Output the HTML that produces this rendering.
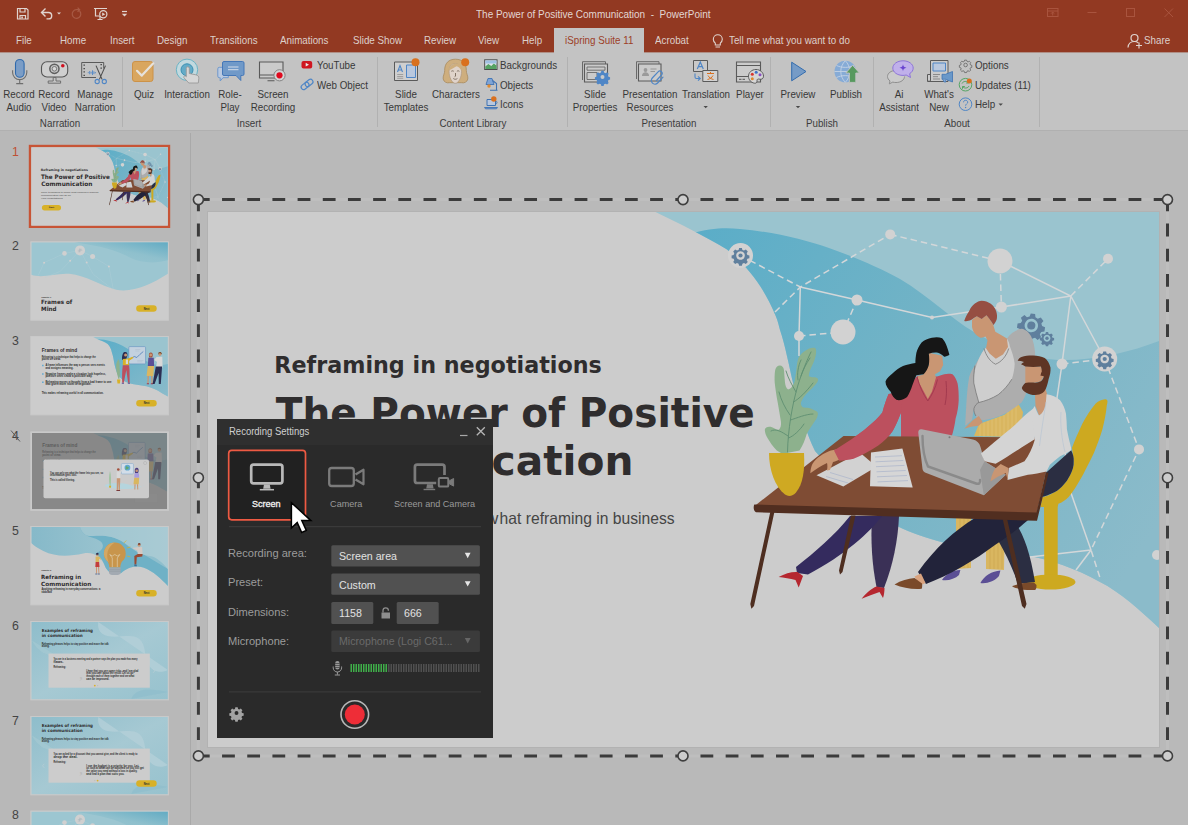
<!DOCTYPE html>
<html lang="en">
<head>
<meta charset="utf-8">
<title>The Power of Positive Communication - PowerPoint</title>
<style>
*{box-sizing:border-box;margin:0;padding:0}
html,body{width:1188px;height:825px;overflow:hidden}
body{position:relative;background:#b9b9b9;font-family:"Liberation Sans",sans-serif;font-size:9.8px;color:#383838}
.abs{position:absolute}
#hdr{position:absolute;left:0;top:0;width:1188px;height:52px;background:#923922}
#hdrline{position:absolute;left:0;top:52px;width:1188px;height:1px;background:#b08f86}
#ribbon{position:absolute;left:0;top:53px;width:1188px;height:77px;background:#c3c3c3}
#ribline{position:absolute;left:0;top:130px;width:1188px;height:1px;background:#b0b0b0}
.tab{position:absolute;top:33px;height:14px;line-height:14px;font-size:10.8px;color:#ddd0cb;white-space:pre;transform:scaleX(.907);transform-origin:0 50%}
#acttab{position:absolute;left:554px;top:28px;width:89.5px;height:25px;background:#c3c3c3}
.t{position:absolute;white-space:pre;line-height:13px}
.big{position:absolute;top:87.5px;width:80px;margin-left:-40px;text-align:center;line-height:13px;white-space:pre;font-size:10.8px;transform:scaleX(.907)}
.grp{position:absolute;top:117px;width:100px;margin-left:-50px;text-align:center;line-height:13px;color:#3c3c3c;font-size:10.8px;transform:scaleX(.907)}
.sep{position:absolute;top:57px;width:1px;height:70px;background:#b1b1b1}
.sm{position:absolute;white-space:pre;line-height:13px;font-size:10.8px;transform:scaleX(.907);transform-origin:0 50%}
#leftpanel{position:absolute;left:0;top:131px;width:190px;height:694px;background:#b8b8b8}
#vsep{position:absolute;left:190px;top:133px;width:1px;height:692px;background:#a9a9a9}
.num{position:absolute;left:8px;width:15px;text-align:center;font-size:12.6px;line-height:14px;color:#424242}
.th{position:absolute;left:30px;width:139px;height:79.5px;background:#cccccc;border:1px solid #c8c8c8;overflow:hidden}
#slide{position:absolute;left:208px;top:212px;width:951px;height:535px;background:#cccccc;overflow:hidden}
#slideborder{position:absolute;left:207px;top:211px;width:953px;height:537px;background:#b2b2b2}
.dl{font-size:9.800px;line-height:13px;text-align:center;white-space:pre;transform:scaleX(.925)}
.lb{font-size:11.100px;line-height:14px;white-space:pre;color:#9c9c9c}
.dv{font-size:10.900px;line-height:14px;white-space:pre;color:#e2e2e2;transform:scaleX(.977);transform-origin:0 50%}
</style>
</head>
<body>
<div id="hdr"></div>
<div id="hdrline"></div>
<div id="ribbon"></div>
<div id="ribline"></div>
<div id="acttab"></div>
<!--TABS-->
<div class="tab" style="left:476px;top:7px;font-size:11px;color:#e2d6d2">The Power of Positive Communication  -  PowerPoint</div>
<div class="tab" style="left:16px">File</div>
<div class="tab" style="left:60px">Home</div>
<div class="tab" style="left:110px">Insert</div>
<div class="tab" style="left:157px">Design</div>
<div class="tab" style="left:209.8px">Transitions</div>
<div class="tab" style="left:279.5px">Animations</div>
<div class="tab" style="left:353px">Slide Show</div>
<div class="tab" style="left:424px">Review</div>
<div class="tab" style="left:477.5px">View</div>
<div class="tab" style="left:521.5px">Help</div>
<div class="tab" style="left:565px;color:#9c3e27">iSpring Suite 11</div>
<div class="tab" style="left:655px">Acrobat</div>
<div class="tab" style="left:729px">Tell me what you want to do</div>
<div class="tab" style="left:1144px">Share</div>
<svg class="abs" style="left:0;top:0" width="1188" height="53" viewBox="0 0 1188 53" fill="none" stroke="#e0d4cf" stroke-width="1.2">
<!-- save -->
<path d="M17.5 8.5h9l1.5 1.5v9h-10.500z M20 8.500v3.500h5v-3.500 M20 19v-3.500h5.500v3.500" />
<rect x="21.3" y="16.500" width="1.600" height="2" fill="#e0d4cf" stroke="none"/>
<!-- undo -->
<path d="M42 12.500h6.500a3.200 3.200 0 0 1 0 6.400h-2 M45.500 8.500l-4 4 4 4" stroke-width="1.400"/>
<path d="M57 12.500h4l-2 2z" fill="#e0d4cf" stroke="none"/>
<!-- redo (dim) -->
<path d="M79.600 11a4.300 4.300 0 1 1 -3-1.300h2.800 M77.600 7.600l2.100 2.100-2.100 2.100" stroke="#a85a45" stroke-width="1.200"/>
<!-- present -->
<path d="M94 8.500h13 M95.500 8.500v7.500h4 M97.500 19.500h5 M100 16v3.500" stroke-width="1.200"/>
<circle cx="103.300" cy="14.200" r="3.600" />
<path d="M102.200 12.400v3.600l3-1.800z" fill="#e0d4cf" stroke="none"/>
<!-- customize -->
<path d="M122 11.500h5" stroke-width="1.200"/>
<path d="M121.800 13.800h5.400l-2.700 2.700z" fill="#e0d4cf" stroke="none"/>
<!-- bulb -->
<path d="M715.300 43.200c-1.300-1.200-2-2.400-2-4a4.500 4.500 0 0 1 9 0c0 1.600-.7 2.800-2 4v1.800h-5z M715.500 47h4.500" stroke-width="1.100"/>
<!-- share icon -->
<circle cx="1134.500" cy="38" r="3.500" stroke-width="1.200"/>
<path d="M1128 47.500c.3-3.500 2.500-6 6.500-6 1.500 0 2.800.5 3.700 1.200 M1139 42.500v6 M1136 45.500h6" stroke-width="1.200"/>
<!-- window controls (dim) -->
<g stroke="#a9543e" stroke-width="1">
<rect x="1047.500" y="8.500" width="10.500" height="8"/><path d="M1047.500 11h10.500 M1052.700 15.500v-3.500 M1051 13.700l1.700-1.700 1.700 1.700"/>
<path d="M1087.500 12.500h9"/>
<rect x="1126.500" y="8.500" width="8" height="8"/>
<path d="M1164.500 8.500l8.500 8.500 M1173 8.500l-8.500 8.500"/>
</g>
</svg>
<!--/TABS-->
<!--RIBBON-->
<div class="sep" style="left:122px"></div>
<div class="sep" style="left:377px"></div>
<div class="sep" style="left:567px"></div>
<div class="sep" style="left:770px"></div>
<div class="sep" style="left:873px"></div>
<div class="sep" style="left:1039px"></div>
<div class="big" style="left:19px">Record
Audio</div>
<div class="big" style="left:54.3px">Record
Video</div>
<div class="big" style="left:94.5px">Manage
Narration</div>
<div class="big" style="left:143.5px">Quiz</div>
<div class="big" style="left:186.5px">Interaction</div>
<div class="big" style="left:230px">Role-
Play</div>
<div class="big" style="left:272.5px">Screen
Recording</div>
<div class="big" style="left:406px">Slide
Templates</div>
<div class="big" style="left:455.5px">Characters</div>
<div class="big" style="left:595px">Slide
Properties</div>
<div class="big" style="left:649.5px">Presentation
Resources</div>
<div class="big" style="left:705.5px">Translation</div>
<div class="big" style="left:749.5px">Player</div>
<div class="big" style="left:798px">Preview</div>
<div class="big" style="left:846px">Publish</div>
<div class="big" style="left:898.5px">Ai
Assistant</div>
<div class="big" style="left:939px">What's
New</div>
<div class="grp" style="left:59.5px">Narration</div>
<div class="grp" style="left:249px">Insert</div>
<div class="grp" style="left:473px">Content Library</div>
<div class="grp" style="left:669px">Presentation</div>
<div class="grp" style="left:822px">Publish</div>
<div class="grp" style="left:956.5px">About</div>
<div class="sm" style="left:316.5px;top:59px">YouTube</div>
<div class="sm" style="left:316.5px;top:78.5px">Web Object</div>
<div class="sm" style="left:500px;top:59px">Backgrounds</div>
<div class="sm" style="left:500px;top:78.5px">Objects</div>
<div class="sm" style="left:500px;top:98px">Icons</div>
<div class="sm" style="left:975px;top:59px">Options</div>
<div class="sm" style="left:975px;top:78.5px">Updates (11)</div>
<div class="sm" style="left:975px;top:98px">Help</div>
<!--RIBICONS-->
<svg class="abs" style="left:0;top:53px" width="1188" height="78" viewBox="0 53 1188 78" fill="none">
<!-- mic -->
<rect x="15.500" y="59.500" width="8.600" height="17.800" rx="4.300" fill="#7b9dc6" stroke="#2f6aad" stroke-width="1.100"/>
<path d="M12.600 70.200v2.300a7.100 7.100 0 0 0 14.200 0v-2.300 M19.700 79.600v3.700 M16.200 83.600h7" stroke="#6e6e6e" stroke-width="1.100"/>
<!-- webcam -->
<rect x="41.500" y="61.700" width="26.200" height="15.300" rx="5.500" fill="#cfcfcf" stroke="#555" stroke-width="1.100"/>
<circle cx="54.400" cy="68.800" r="4.600" fill="#c4c4c4" stroke="#5e5e5e" stroke-width="1.500"/>
<circle cx="54.400" cy="68.800" r="2.300" fill="#d8d8d8" stroke="#6e6e6e" stroke-width=".9"/>
<circle cx="62.800" cy="65.700" r="1.800" fill="#d0101f"/>
<path d="M53.200 77.500h2.800v3.500h4.600v2.200h-12.400v-2.200h5z" fill="#c4c4c4" stroke="#666" stroke-width=".9"/>
<!-- manage narration -->
<path d="M96 77.500h-14.300v-15h22v6" stroke="#5a5a5a" stroke-width="1"/>
<path d="M84.200 64.500v11.500 M101.200 64v5" stroke="#4a4a4a" stroke-width="1.500" stroke-dasharray="1.300 2.100"/>
<path d="M88.300 72.200v1 M89.700 71v3.300 M91.100 71.800v1.800 M92.500 70.300v4.700 M93.900 71.300v2.800 M95.300 72v1.300" stroke="#4f86c6" stroke-width=".9"/>
<path d="M96 65.600l6.100 13.800 M105.500 65.600l-6.100 13.800" stroke="#4d4d4d" stroke-width="1.100"/>
<circle cx="97.200" cy="81.500" r="2.100" stroke="#4f86c6" stroke-width="1.100"/>
<circle cx="104.300" cy="81.500" r="2.100" stroke="#4f86c6" stroke-width="1.100"/>
<!-- quiz -->
<rect x="132.500" y="61.500" width="20.500" height="20" rx="2.500" fill="#d9a65f" stroke="#cc9248" stroke-width="1"/>
<path d="M137 70.800l4.800 4.800l11.500-12.300" stroke="#e6e2dc" stroke-width="2.200" stroke-linecap="round" stroke-linejoin="round"/>
<!-- interaction -->
<circle cx="187" cy="69.800" r="10.700" fill="#c1d9df" stroke="#6cb3c4" stroke-width="1"/>
<circle cx="187" cy="69.800" r="6" fill="#64abc7" stroke="#3a90b3" stroke-width="1"/>
<path d="M186.300 68.300a1.500 1.500 0 0 1 3 0v5.200l6.500 1.300c2.200.5 3.200 1.600 3 3.700l-.5 4.500h-9.500l-4.800-5.200c-.8-1 .3-2.500 1.500-1.700l.8.700z" fill="#d6d6d6" stroke="#9a9a9a" stroke-width=".9" stroke-linejoin="round"/>
<!-- role-play -->
<path d="M219.300 67.300h9v10.400h-5.300l-2.800 3.300v-3.300h-.9a1.500 1.500 0 0 1 -1.500-1.500v-7.400a1.500 1.500 0 0 1 1.500-1.500z" fill="#bacae1" stroke="#6e98cc" stroke-width="1"/>
<path d="M224 61.500h18.500a1.500 1.500 0 0 1 1.500 1.500v11a1.500 1.500 0 0 1 -1.500 1.500h-1.700v5l-4.800-5h-12a1.500 1.500 0 0 1 -1.500-1.500v-11a1.500 1.500 0 0 1 1.500-1.500z" fill="#7099c8" stroke="#4477b8" stroke-width="1"/>
<path d="M228 67h10.500 M228 69.700h10.500" stroke="#d6dde8" stroke-width="1"/>
<!-- screen recording -->
<path d="M259.500 62h23.500v16h-23.500z" fill="#cbcbcb" stroke="#5a5a5a" stroke-width="1.100"/>
<path d="M259.500 75h16 M267.500 80.700h7" stroke="#5a5a5a" stroke-width="1.100"/>
<circle cx="279.500" cy="75.300" r="5.600" fill="#d4d4d4" stroke="#7a7a7a" stroke-width=".9"/>
<circle cx="279.500" cy="75.300" r="3.100" fill="#df0a1e"/>
<!-- youtube -->
<rect x="301.500" y="61" width="10.700" height="7.400" rx="2" fill="#cf1620"/>
<path d="M305.700 62.800v3.800l3.300-1.900z" fill="#e8e8e8"/>
<!-- web object link -->
<g stroke="#4f86c6" stroke-width="1.200" fill="none" transform="rotate(-38 307 84.500)">
<rect x="300.300" y="82" width="8.600" height="5" rx="2.500"/>
<rect x="305.300" y="82" width="8.600" height="5" rx="2.500"/>
</g>
<!-- slide templates -->
<path d="M394.500 62h23v18.500h-23z" fill="#cfcfcf" stroke="#5a5a5a" stroke-width="1"/>
<path d="M406.500 65h9v12.500h-9z" fill="#b9c8de" stroke="#4f86c6" stroke-width="1"/>
<path d="M397.500 72l2.500-6.500l2.500 6.500 M398.400 70h3.200" stroke="#4f86c6" stroke-width="1.100"/>
<path d="M397.200 74.500h6 M397.200 76.500h6 M397.200 78.300h6" stroke="#8a8a8a" stroke-width=".7"/>
<circle cx="415.500" cy="62.300" r="4" fill="#d9701e"/>
<!-- characters -->
<path d="M455.500 59.200C462.500 59.200 466.500 63.500 466.300 70.500C466.200 73.500 468.300 76 467.800 79C467.300 82 464 83.400 461.500 82.700L449.500 82.700C447 83.400 443.700 82 443.200 79C442.700 76 444.800 73.500 444.700 70.500C444.500 63.500 448.500 59.200 455.500 59.200Z" fill="#ceae7e" stroke="#a88a5e" stroke-width=".8"/>
<path d="M455.300 63.800c4.300 0 6.200 3.200 6.200 7.700c0 5.800-2.900 11.800-6.200 11.800s-6.200-6-6.200-11.800c0-4.500 1.900-7.700 6.200-7.700z" fill="#e0d3ca" stroke="#a8937f" stroke-width=".6"/>
<path d="M451.300 71.300c.8-.6 1.700-.6 2.500 0 M456.900 71.300c.8-.6 1.700-.6 2.500 0 M453.300 78.500c1.300 1 2.800 1 4.100 0 M455.500 73v3.200l-.9.500" stroke="#6a5a4c" stroke-width=".8" fill="none"/>
<path d="M448.900 70.500C449.600 65.800 452.800 63.300 457 63.800C460.600 64.300 462 67 461.800 71C460.200 68.300 458.500 66.700 456.500 66.200C454 67.800 451.300 69 448.900 70.500Z" fill="#ceae7e"/>
<circle cx="465.200" cy="62.300" r="4" fill="#d9701e"/>
<!-- backgrounds -->
<rect x="484.700" y="59.800" width="12.300" height="9.700" fill="#dfe4ea" stroke="#4a4a4a" stroke-width="1"/>
<path d="M485.300 66.500l3-2.500l3 2l2.500-2.500l2.700 2v3.500h-11.200z" fill="#55a263"/>
<path d="M485.300 60.500h11.200v3h-11.200z" fill="#9fc0e2"/>
<!-- objects lamp -->
<path d="M488 78.500h4l2 6h-8z" fill="#7ea4d6" stroke="#3f73b3" stroke-width=".9"/>
<path d="M492.500 80.500l4 3v6.500 M490 90.300h7.500" stroke="#3f73b3" stroke-width="1.100"/>
<circle cx="489" cy="86" r="1.700" fill="#e08a2e"/>
<!-- icons -->
<path d="M487 99.500h8.500v6h-8.500z" fill="#b9c8de" stroke="#3f73b3" stroke-width="1"/>
<path d="M484.500 107.500h13l-1 1.300h-11z" fill="#7ea4d6" stroke="#3f73b3" stroke-width=".9"/>
<path d="M495.500 101c2 0 2 3 0 3" stroke="#3f73b3" stroke-width=".9"/>
<circle cx="493.800" cy="99" r="2.700" fill="#d9701e"/>
<!-- slide properties -->
<path d="M582.500 80v-18.300h23v2.300" stroke="#6a6a6a" stroke-width="1"/>
<path d="M584.500 64h23v18h-23z" fill="#cbcbcb" stroke="#5a5a5a" stroke-width="1.100"/>
<path d="M587 67h18v3.200h-18z M587 72.500h10v7h-10z" stroke="#6a6a6a" stroke-width=".9"/>
<g transform="translate(602.500 77) scale(.88)"><path d="M-1.300-7h2.600l.5 1.900 1.700.7 1.700-1 1.800 1.800-1 1.700.7 1.700 1.900.5v2.600l-1.900.5-.7 1.700 1 1.700-1.800 1.800-1.700-1-1.700.7-.5 1.900h-2.600l-.5-1.900-1.700-.7-1.700 1-1.800-1.800 1-1.700-.7-1.700-1.900-.5v-2.600l1.900-.5.700-1.700-1-1.700 1.800-1.800 1.700 1 1.700-.7z" fill="#4f86c6"/><circle r="2.300" fill="#c9c9c9"/></g>
<!-- presentation resources -->
<path d="M636.500 79v-17.300h22.500v2.300" stroke="#6a6a6a" stroke-width="1"/>
<path d="M638.500 64h22.500v17h-22.500z" fill="#cbcbcb" stroke="#5a5a5a" stroke-width="1.100"/>
<circle cx="645.500" cy="70" r="1.900" fill="#9a9a9a"/><path d="M642 76c0-2.500 1.500-3.700 3.500-3.700s3.500 1.200 3.500 3.700z" fill="#9a9a9a"/>
<path d="M650.500 69h6 M650.500 71.500h4.500" stroke="#8a8a8a" stroke-width=".8"/>
<g stroke="#4f86c6" stroke-width="1.200" stroke-linecap="round"><path d="M656.500 80.500l5-5.500a2.300 2.300 0 0 0 -3.400-3.200l-5.800 6.200a3.600 3.600 0 0 0 5.300 5l5.400-5.800"/></g>
<!-- translation -->
<path d="M693.500 60.500h14v11h-14z" fill="#c9c9c9" stroke="#5a5a5a" stroke-width="1"/>
<path d="M697.300 69l3-7l3 7 M698.300 66.700h4" stroke="#4f86c6" stroke-width="1.200"/>
<path d="M702.800 70.500h15v11h-15z" fill="#d2d2d2" stroke="#5a5a5a" stroke-width="1"/>
<path d="M707 73.500h7 M710.500 72v1.500 M708 75.500c1 2 3 3.500 5.500 4 M713 75.500c-1 2-3 3.500-5.500 4" stroke="#d9701e" stroke-width="1"/>
<path d="M695 73.500v3.500a1.500 1.500 0 0 0 1.500 1.500h3.500 M698 76.300l2.300 2.200-2.300 2.200" stroke="#4f86c6" stroke-width="1.100"/>
<!-- player -->
<path d="M736.500 62h24v20h-24z" fill="#cbcbcb" stroke="#5a5a5a" stroke-width="1.100"/>
<path d="M736.500 65.500h24 M736.500 76.500h13" stroke="#5a5a5a" stroke-width="1"/>
<path d="M739 79.300h2.500 M742.500 79.300h2.500" stroke="#6a6a6a" stroke-width="1.300"/>
<path d="M756 69.500c4.200 0 7.500 3 7.500 6.700c0 2.500-2 3.500-3.700 3c-1.700-.5-3 0-2.800 1.500c.2 1.500-.8 2.800-2.500 2.500c-3.500-.6-6-3.300-6-7c0-3.700 3.300-6.700 7.500-6.700z" fill="#d6d6d6" stroke="#5a5a5a" stroke-width="1"/>
<circle cx="752.300" cy="74.300" r="1.500" fill="#d8352e"/><circle cx="756.200" cy="72.300" r="1.500" fill="#3f73c8"/><circle cx="760" cy="74.800" r="1.500" fill="#8a4fc0"/><circle cx="752.300" cy="78.800" r="1.500" fill="#e08a2e"/>
<!-- preview -->
<path d="M791.700 62.200l14.300 9.300l-14.300 9.300z" fill="#769bc6" stroke="#336cae" stroke-width="1" stroke-linejoin="round"/>
<!-- publish -->
<circle cx="845.300" cy="71.500" r="10.800" fill="#86abd6"/>
<path d="M834.500 71.500h21.600 M845.300 60.700c-6 6-6 15.600 0 21.600 M845.300 60.700c6 6 6 15.600 0 21.600 M836.500 65.500c5 2.500 12.600 2.500 17.600 0 M836.500 77.500c5-2.500 12.600-2.500 17.600 0" stroke="#c3d1e4" stroke-width=".9"/>
<path d="M852.600 65.300l6.800 7.700h-3.600v9.400h-6.400v-9.400h-3.600z" fill="#57995f" stroke="#c3c3c3" stroke-width=".9"/>
<!-- ai assistant -->
<path d="M896 70.500c-5 0-8.500 2.700-8.500 6c0 1.800 1 3.300 2.500 4.400l-.7 3l3.500-1.800c1 .3 2 .4 3.200.4c5 0 8.500-2.700 8.500-6" fill="#cbcbcb" stroke="#8e8e8e" stroke-width="1"/>
<path d="M903 60.800c5.800 0 10.200 3.300 10.200 7.300c0 2.300-1.400 4.300-3.600 5.600l.9 3.800l-4.300-2.500c-1 .2-2 .4-3.200.4c-5.800 0-10.200-3.300-10.200-7.300s4.400-7.300 10.200-7.300z" fill="#c0b0ea" stroke="#8d74d8" stroke-width="1"/>
<path d="M903 64.300c.4 2.300 1.200 3.100 3.500 3.500c-2.300.4-3.100 1.200-3.500 3.500c-.4-2.300-1.200-3.100-3.500-3.500c2.300-.4 3.100-1.200 3.500-3.500z" fill="#6a45d0"/>
<!-- what's new -->
<path d="M930.500 60.500h17.500v21h-20.500v-7h3" fill="#cbcbcb" stroke="#5a5a5a" stroke-width="1"/>
<path d="M930.500 60.500v19.500a1.500 1.500 0 0 1 -3 0" stroke="#5a5a5a" stroke-width="1"/>
<path d="M933 63h12.500v8h-12.500z" fill="#b9c8de" stroke="#4f86c6" stroke-width="1"/>
<path d="M933 74.500h7 M933 76.700h5 M933 79h7" stroke="#7a7a7a" stroke-width=".8"/>
<path d="M952.500 71.500v10.500l-7-2.700h-3.500v-5h3.500z" fill="#6a98c9" stroke="#3f73b3" stroke-width=".8"/>
<path d="M943 79.500l1 2.500h2l-.7-2.500" fill="#86abd6" stroke="#3f73b3" stroke-width=".7"/>
<!-- options gear -->
<g transform="translate(965.600 65) scale(.75)"><path d="M-1.300-6.500h2.600l.6 1.800 1.400.6 1.700-.9 1.800 1.800-.9 1.700.6 1.400 1.800.6v2.600l-1.800.6-.6 1.400.9 1.700-1.800 1.800-1.700-.9-1.400.6-.6 1.800h-2.600l-.6-1.800-1.400-.6-1.700.9-1.800-1.800.9-1.700-.6-1.400-1.800-.6v-2.600l1.800-.6.600-1.400-.9-1.700 1.800-1.800 1.700.9 1.400-.6z" stroke="#555" stroke-width=".9"/><circle r="2.400" stroke="#555" stroke-width=".9"/></g>
<!-- updates -->
<circle cx="965.500" cy="84.700" r="6.300" stroke="#56a565" stroke-width="1"/>
<path d="M962 83.500c1-2.300 4.500-2.800 6.300-.8 M968.500 80.700v2.300h-2.300 M969 86c-1 2.300-4.500 2.800-6.300.8 M962.500 88.800v-2.300h2.300" stroke="#56a565" stroke-width="1"/>
<circle cx="969.300" cy="81" r="2.500" fill="#d9701e"/>
<!-- help -->
<circle cx="965.500" cy="104.200" r="6.300" stroke="#4f86c6" stroke-width="1"/>
<path d="M963.500 102.300c0-1.300 1-2 2.100-2c1.200 0 2.100.8 2.100 1.900c0 1.700-2.100 1.700-2.100 3.500" stroke="#4f86c6" stroke-width="1"/><circle cx="965.600" cy="107.500" r=".7" fill="#4f86c6"/>
<!-- dropdown arrows -->
<path d="M703.500 106h4.400l-2.200 2.300z M795.800 106h4.400l-2.200 2.300z M998.500 103.500h4.400l-2.200 2.300z" fill="#4a4a4a"/>
</svg>
<!--/RIBBON-->
<div id="vsep"></div>
<!--THUMBS-->
<svg class="abs" style="left:0;top:131px" width="190" height="694" viewBox="0 131 190 694">
<defs>
<linearGradient id="t2g" x1="0" y1="1" x2="1" y2="0"><stop offset="0" stop-color="#9cc6d1"/><stop offset=".55" stop-color="#8fc0cd"/><stop offset="1" stop-color="#62abc3"/></linearGradient>
<linearGradient id="t3g" x1="0" y1="0" x2="1" y2="1"><stop offset="0" stop-color="#5aadc8"/><stop offset="1" stop-color="#8bbbca"/></linearGradient>
<linearGradient id="t5g" x1="0" y1="0" x2="1" y2="0"><stop offset="0" stop-color="#86b9c9"/><stop offset="1" stop-color="#a9cbd4"/></linearGradient>
<linearGradient id="t6g" x1="0" y1="0" x2="1" y2="1"><stop offset="0" stop-color="#8ebdcb"/><stop offset=".5" stop-color="#a6c9d3"/><stop offset="1" stop-color="#97c2ce"/></linearGradient>
<g id="pill"><rect x="104.900" y="63" width="20.500" height="6.500" rx="3.250" fill="#d8b128"/><text x="115.200" y="67.300" font-size="2.600" font-weight="700" text-anchor="middle" fill="#2f2d2e">Next</text></g>
<g id="t2c">
<rect width="136.600" height="77.400" fill="#cccccc"/>
<path d="M0 32.500C12 36.500 24 30.500 38 31.500C55 33 70 44 85 47.500C102 50.500 120 42 136.600 31.500L136.600 0L0 0Z" fill="#9cc6d1"/>
<path d="M43 0C60 3 80 5 98 15C112 22 126 20.500 136.600 18L136.600 0Z" fill="url(#t2g)"/>
<g stroke="#b4d2da" stroke-width=".35" fill="none"><path d="M7 33L12.800 20.400L33.200 11.100L48.700 8.100L61.300 14.300L77.600 24.100L82 47 M14 35L29 29L38.900 18.500L48.700 8.100L55.400 20.200L62 32L80 46"/></g>
<g fill="#d0d0d0"><circle cx="33.200" cy="11.100" r="2.300"/><circle cx="48.700" cy="8.100" r="5"/><circle cx="61.300" cy="14.300" r="2.500"/><circle cx="12.800" cy="20.400" r="1"/><circle cx="38.900" cy="18.500" r="1"/><circle cx="55.400" cy="20.200" r="1"/><circle cx="77.600" cy="24.100" r="1"/></g>
<path d="M46.500 9.500h2v-2.500h2 M48.500 10v-4 M46.500 8h4.500" stroke="#a9b6bd" stroke-width=".5" fill="none"/>
</g>
<g id="t3c">
<rect width="136.600" height="77.400" fill="#cccccc"/>
<path d="M62 0C68 3.500 73.500 5 76.400 7.100C79 10 80 12.500 80.600 15.500C82 19.500 82.500 23.500 83.200 27.300C84 31 85 34.500 86.500 37.400C89 41.500 92.500 44 96.600 45.800C102.500 47.800 109 48 115.200 49.200C120.500 50.500 126 53 130.300 55.900C132.500 57 134.500 58.300 136.600 59.500L136.600 0Z" fill="#9ac4cf"/>
<path d="M66 2.300C75 2.500 85 5 95 11C105 17 112 24 122 27C128 28.500 132 28 136.600 27L136.600 59.500C134.500 58.300 132.500 57 130.300 55.900C126 53 120.500 50.500 115.200 49.200C109 48 102.500 47.800 96.600 45.800C92.500 44 89 41.500 86.500 37.400C85 34.500 84 31 83.200 27.300C82.500 23.500 82 19.500 80.600 15.500C80 12.500 79 10 76.400 7.100C73.500 5 70 3.500 66 2.300Z" fill="url(#t3g)"/>
<text x="10.400" y="14.600" font-size="4.900" font-weight="700" fill="#2f2d2e" textLength="35.400" lengthAdjust="spacingAndGlyphs">Frames of mind</text>
<g fill="#2a2a2a" font-size="2.900" font-weight="700">
<text x="10.400" y="20.700" textLength="54" lengthAdjust="spacingAndGlyphs">Reframing is a technique that helps to change the</text>
<text x="10.400" y="23.300" textLength="19" lengthAdjust="spacingAndGlyphs">point of view.</text>
<text x="14.100" y="29.200" textLength="59.500" lengthAdjust="spacingAndGlyphs">A frame influences the way a person sees events</text>
<text x="14.100" y="31.700" textLength="28" lengthAdjust="spacingAndGlyphs">and assigns meaning.</text>
<text x="14.100" y="37.600" textLength="60.500" lengthAdjust="spacingAndGlyphs">Negative frames make a situation look hopeless,</text>
<text x="14.100" y="40.100" textLength="47" lengthAdjust="spacingAndGlyphs">positive ones show a possible way.</text>
<text x="14.100" y="45.800" textLength="66" lengthAdjust="spacingAndGlyphs">Reframing moves a thought from a bad frame to one</text>
<text x="14.100" y="48.300" textLength="46" lengthAdjust="spacingAndGlyphs">that gives more room to negotiate.</text>
<text x="10.400" y="56.900" textLength="61.800" lengthAdjust="spacingAndGlyphs">This makes reframing useful in all communication.</text>
</g>
<path d="M10.800 27.800h1.500v1.500h-1.500z M10.800 36.200h1.500v1.500h-1.500z M10.800 44.500h1.500v1.500h-1.500z" fill="#5fa8d0"/>
<use href="#pill"/>
<!-- plant -->
<path d="M87.400 42.500C86 38 84.500 33 84.800 28C85.200 25 86.500 23 87.500 22.300C88.500 25 88.300 28 88.300 31C89 35 88.500 39 87.900 42.500Z" fill="#8db18d"/>
<path d="M85.700 42.400h3.400l-.5 4.200h-2.400z" fill="#d8b128"/>
<!-- board -->
<rect x="97.500" y="9.600" width="16.800" height="17.300" rx="1" fill="#c3d1df" stroke="#5f8fc0" stroke-width=".6"/>
<path d="M99.500 21.500l3.500-2l2.500 1l3-3l3.500-3" stroke="#3f73b3" stroke-width=".7" fill="none"/>
<path d="M104 12.500h5 M104 14h4 M106 23.500h6 M106 24.800h5" stroke="#a9b8c8" stroke-width=".4"/>
<!-- woman1 -->
<path d="M92.200 15.500C93.500 14.800 95.500 15 96 16.500C96.500 18.500 95.500 20 95 22C94 23 92 23.500 90.800 22.500C90.500 20 91 17 92.200 15.500Z" fill="#2b2e52"/>
<circle cx="94.300" cy="18" r="1.500" fill="#c99673"/>
<path d="M91.600 22L96.500 21.500L101.700 19.800L102 21L97.500 24L97.800 28.300L91.500 28.300Z" fill="#d8b128"/>
<path d="M91.500 28.300L97.800 28.300C98.500 34 98.300 40 98.300 45.800L96.800 45.800L95 33L92.500 45.800L90.900 45.800C90.700 40 90.700 34 91.500 28.300Z" fill="#bc505e"/>
<path d="M94.500 22.500h2.200v4.500h-2.200z" fill="#d6d6d6"/>
<path d="M90.500 45.800h2.200v1h-2.200z M96.500 45.800h2.200v1h-2.200z" fill="#5b4f95"/>
<!-- woman2 -->
<path d="M117.800 16.500C118.500 15.200 120.500 15 121.200 16.500C121.700 18 121.300 19.500 120.800 20.500L118 20.500C117.500 19 117.500 17.500 117.800 16.500Z" fill="#a4503c"/>
<circle cx="119.400" cy="18" r="1.400" fill="#c99673"/>
<path d="M117 20.800L122.500 20.800L122.800 29L116.500 29Z" fill="#5b4f95"/>
<path d="M116.500 29L122.800 29L122 39L115.300 39Z" fill="#d9b660"/>
<path d="M116.200 39h1.500l-.5 7.500h-1.200z M119.700 39h1.500l.2 7.500h-1.200z" fill="#c99673"/>
<path d="M115.500 46.300h2.200v.9h-2.200z M119.500 46.300h2.200v.9h-2.200z" fill="#a33a4f"/>
<!-- man -->
<path d="M127 15.800C128 14.500 130 14.800 130.300 16.300L130 17.500L127.200 17.500Z" fill="#7a4a2a"/>
<circle cx="128.600" cy="17.600" r="1.400" fill="#c99673"/>
<path d="M125.300 20L131 19.800L131.300 30.600L124.500 30.600L125.800 25L123 23L123.500 22Z" fill="#d8d8d8"/>
<path d="M124.500 29.500L130.800 29.500L129.500 47L127.500 47L127.300 36L123.300 47L121.300 47Z" fill="#2b2e52"/>
</g>
</defs>
<rect x="0" y="131" width="190" height="694" fill="#b8b8b8"/>
<text x="15.400" y="155.500" font-size="12.300" text-anchor="middle" fill="#bf5034">1</text>
<text x="15.500" y="250.2" font-size="12.300" text-anchor="middle" fill="#444">2</text>
<text x="15.500" y="344.9" font-size="12.300" text-anchor="middle" fill="#444">3</text>
<text x="15.500" y="440.3" font-size="12.300" text-anchor="middle" fill="#444">4</text>
<text x="15.500" y="534.9" font-size="12.300" text-anchor="middle" fill="#444">5</text>
<text x="15.500" y="629.9" font-size="12.300" text-anchor="middle" fill="#444">6</text>
<text x="15.500" y="724.9" font-size="12.300" text-anchor="middle" fill="#444">7</text>
<text x="15.500" y="819.4" font-size="12.300" text-anchor="middle" fill="#444">8</text>
<path d="M11 430.500L20 441.500" stroke="#555" stroke-width=".9"/>
<rect x="30" y="146" width="139" height="80.800" fill="#cccccc" stroke="#c75436" stroke-width="2.400"/>
<svg x="31.300" y="147.300" width="136.600" height="78.200" viewBox="208 212 951 535" preserveAspectRatio="none"><rect x="208" y="212" width="951" height="545" fill="#cccccc"/><use href="#art"/><use href="#stx"/></svg>
<rect x="30.800" y="241.8" width="137.600" height="78.400" fill="#cccccc" stroke="#c9c9c9" stroke-width="1"/><svg x="31.3" y="242.3" width="136.6" height="77.4" viewBox="0 0 136.6 77.4"><use href="#t2c"/>
<text x="9.900" y="55.400" font-size="2.200" font-weight="700" fill="#333">Chapter 1</text>
<g font-family="'DejaVu Sans','Liberation Sans',sans-serif" font-weight="700" font-size="5.800" fill="#2f2d2e"><text x="9.800" y="61.800" textLength="31.100" lengthAdjust="spacingAndGlyphs">Frames of</text><text x="9.800" y="68.400" textLength="15.500" lengthAdjust="spacingAndGlyphs">Mind</text></g>
<use href="#pill"/></svg>
<rect x="30.800" y="336.5" width="137.600" height="78.400" fill="#cccccc" stroke="#c9c9c9" stroke-width="1"/><svg x="31.3" y="337.0" width="136.6" height="77.4" viewBox="0 0 136.6 77.4"><use href="#t3c"/></svg>
<rect x="30.800" y="431.9" width="137.600" height="78.400" fill="#cacaca" stroke="#c9c9c9" stroke-width="1"/><svg x="32" y="433.0" width="135.200" height="76.200" viewBox="0 0 136.6 77.4" preserveAspectRatio="none"><use href="#t3c"/><rect width="136.600" height="77.400" fill="#6e6e6e" opacity=".72"/><rect x="104" y="62" width="22.500" height="8.500" fill="#8a8a8a"/>
<rect x="11.600" y="26.800" width="106.600" height="39.600" rx="1.800" fill="#cbcbcb"/>
<g fill="#2a2a2a" font-size="2.900" font-weight="700"><text x="18.300" y="41.500" textLength="53.500" lengthAdjust="spacingAndGlyphs">You can only see what the frame lets you see, so</text><text x="18.300" y="44" textLength="27" lengthAdjust="spacingAndGlyphs">information gets lost.</text><text x="18.300" y="48.900" textLength="25" lengthAdjust="spacingAndGlyphs">This is called filtering.</text></g>
<circle cx="114.300" cy="30.500" r="1.600" fill="none" stroke="#a9a9a9" stroke-width=".4"/>
<path d="M74 52.500C82 50 92 50.500 100 53C108 55.500 113 54 113.500 52.500C108 58 84 58 74 54Z" fill="#b5d5de"/>
<path d="M78.600 54C77.800 49 77.500 44 78.800 38.500C80 42.500 79.800 49 79.400 54Z" fill="#9cc39c"/><path d="M77.800 53.500h2.200l-.3 2.200h-1.600z" fill="#d8b128"/>
<rect x="90.300" y="31" width="12.200" height="10.600" rx="1" fill="#d2dde8" stroke="#7fa6c9" stroke-width=".5"/><circle cx="96.400" cy="35.200" r="2.900" fill="#5fa8d0"/><path d="M95 33.500c1 1 2.500.5 3 2c-1 .8-2 2-3.500 1.300z" fill="#63a86d"/>
<circle cx="87.200" cy="37" r="1.300" fill="#a4503c"/><path d="M85.500 39L89 39L92 35.500L92.500 36.200L89.300 41L89.200 46L85.500 46Z" fill="#d8d8d8"/><path d="M85.700 46L89.200 46L88.800 58L87.500 58L87.300 49L86.800 58L85.600 58Z" fill="#c99673"/><path d="M85.300 58h3.700v.9h-3.700z" fill="#7a3a3a"/>
<path d="M104 36.500C104.800 35 107 35 107.600 36.500C108 38.500 107.500 40 107 41L104.300 41C103.800 39.500 103.700 37.800 104 36.500Z" fill="#4b3f85"/><circle cx="105.800" cy="38.300" r="1.300" fill="#c99673"/>
<path d="M103.600 41L108 41L108.300 45.500L103.300 45.500Z" fill="#a79be0"/><path d="M103.300 45.500L108.300 45.500L107.800 52L102.500 52Z" fill="#d9b660"/><path d="M103.500 52h1.200l-.3 5.500h-1z M106 52h1.200l.2 5.500h-1z" fill="#c99673"/></svg>
<rect x="30.800" y="526.5" width="137.600" height="78.400" fill="#cccccc" stroke="#c9c9c9" stroke-width="1"/><svg x="31.3" y="527.0" width="136.6" height="77.4" viewBox="0 0 136.6 77.4"><rect width="136.600" height="77.400" fill="#cccccc"/>
<path d="M0 0L136.600 0L136.600 59C130 52 122 44 112 40.500C103 38 96 41 90 46C84 49 78 47 74 40C70 30 63 24.500 52 26.500C38 29.500 24 30 12 24C6 21 2 18 0 16Z" fill="url(#t5g)"/>
<path d="M49 0C50 6 54 9.500 62 9C72 8 82 9 90 14C100 21 108 28 118 29C126 30 131 36 136.600 42L136.600 59C130 52 122 44 112 40.500C103 38 96 41 90 46C84 49 78 47 74 40C72 34 69 29 64 27C70 24 74 20 70 15C64 9 52 12 49 0Z" fill="#6fb1c6"/>
<path d="M49 0C50 6 54 9.500 62 9C72 8 82 9 90 14L136.600 42L136.600 0Z" fill="#a9cbd4" opacity=".55"/>
<circle cx="83.500" cy="26.400" r="10.900" fill="#c8954c"/>
<path d="M76.500 34.500C77.500 37 78 38.500 78 40.500L89 40.500C89 38.500 89.500 37 90.500 34.500Z" fill="#c8954c"/>
<path d="M83.500 15.500a10.900 10.900 0 0 0 -6 20c-3-7-2-15 6-20z" fill="#d4a864"/>
<path d="M77.700 40.500h11.600v5c0 1.500-1.500 2.500-3 2.500h-5.600c-1.500 0-3-1-3-2.500z" fill="#a3aab2"/>
<path d="M77.700 42.300h11.600 M77.700 44.200h11.600" stroke="#8d949c" stroke-width=".5"/>
<path d="M81 40V31l-2.500-3.500 2.500 1.500 2.500-1.500 2.500 1.500 2.500-1.500-2.500 3.500V40" stroke="#e3d6b8" stroke-width=".6" fill="none"/>
<path d="M92.500 16l2.500-2.500 M95.500 21l3.500-1 M95.500 29l3.500 .8" stroke="#d8b128" stroke-width=".7"/>
<circle cx="66" cy="27.800" r="1.300" fill="#c99673"/><path d="M64.800 26.500c.5-1 2-1 2.500 0l-.2 1.200h-2.200z" fill="#2b2e52"/>
<path d="M64.300 29.500L67.800 29.500L69.700 32L69.200 32.700L67.800 31.500L67.800 35L64.300 35Z" fill="#d9b660"/><path d="M64.300 35L67.800 35L68.200 40L64 40Z" fill="#c43c3c"/><path d="M64.700 40h1.100l-.2 6.500h-.9z M66.700 40h1.100l.3 6.500h-.9z" fill="#c99673"/><path d="M64 46.500h2v.9h-2z M66.500 46.500h2v.9h-2z" fill="#5b6f95"/>
<circle cx="107.800" cy="18.300" r="1.400" fill="#c99673"/><path d="M106.500 17c.5-1.300 2.500-1.300 2.800 0l-.2.800h-2.400z" fill="#7a3a2a"/>
<path d="M106 20.300L110.800 20L111.300 27L106.500 27L106 23.500L101.500 21.500L101.800 20.800Z" fill="#d2c9c4"/><path d="M106.500 27L111.300 27L111 29.500L105.500 30.300L105 37.500L103.200 37.500L103 29Z" fill="#9a4a32"/><path d="M103 37.500h2.200l.5 1.800h-2.700z" fill="#3f6f95"/>
<text x="9.900" y="44.300" font-size="2.200" font-weight="700" fill="#333">Chapter 2</text>
<g font-family="'DejaVu Sans','Liberation Sans',sans-serif" font-weight="700" font-size="5.700" fill="#2f2d2e"><text x="9.800" y="52" textLength="40" lengthAdjust="spacingAndGlyphs">Reframing in</text><text x="9.800" y="58.700" textLength="50.300" lengthAdjust="spacingAndGlyphs">Communication</text></g>
<g fill="#2a2a2a" font-size="2.900" font-weight="700"><text x="10.200" y="62.900" textLength="59" lengthAdjust="spacingAndGlyphs">Applying reframing in everyday conversations: a</text><text x="10.200" y="65.500" textLength="10.500" lengthAdjust="spacingAndGlyphs">toolkit</text></g>
<use href="#pill"/></svg>
<rect x="30.800" y="621.5" width="137.600" height="78.400" fill="#cccccc" stroke="#c9c9c9" stroke-width="1"/><svg x="31.3" y="622.0" width="136.6" height="77.4" viewBox="0 0 136.6 77.4"><rect width="136.600" height="77.400" fill="url(#t6g)"/>
<path d="M67 0C66 6 68 12 76 14C88 16.500 100 11 108 17C116 24 112 36 118 44C124 52 132 50 136.600 48You are in a business meeting and a partner says the plan you made has many36.600 0Z" fill="#b4d0d8" opacity=".8"/>
<path d="M0 18C8 32 18 34 24 33You are in a business meeting and a partner says the plan you made has many8 77L0 77Z" fill="#a9cbd4" opacity=".5"/>
<path d="M100 77C104 66 118 66 136.600 70You are in a business meeting and a partner says the plan you made has many36.600 77Z" fill="#8fbecc" opacity=".7"/>
<g font-family="'DejaVu Sans','Liberation Sans',sans-serif" font-weight="700" font-size="4.300" fill="#2f2d2e"><text x="10.400" y="10.100" textLength="51.200" lengthAdjust="spacingAndGlyphs">Examples of reframing</text><text x="10.400" y="15.200" textLength="41.100" lengthAdjust="spacingAndGlyphs">in communication</text></g>
<g fill="#2a2a2a" font-size="2.900" font-weight="700"><text x="10.400" y="22.600" textLength="67" lengthAdjust="spacingAndGlyphs">Reframing phrases helps to stay positive and move the talk</text><text x="10.400" y="25.200" textLength="7.800" lengthAdjust="spacingAndGlyphs">along.</text></g>
<rect x="17.200" y="31.600" width="101.300" height="34.100" fill="#cccccc"/>
<g fill="#2a2a2a" font-size="2.900" font-weight="700"><text x="22.200" y="38.400" textLength="84" lengthAdjust="spacingAndGlyphs">You are in a business meeting and a partner says the plan you made has many</text><text x="22.200" y="40.900" textLength="10" lengthAdjust="spacingAndGlyphs">flaws.</text><text x="22.200" y="45.800" textLength="12.500" lengthAdjust="spacingAndGlyphs">Reframing:</text>
<text x="55" y="49.700" textLength="52" lengthAdjust="spacingAndGlyphs">I hear that you see some risks, and I am glad</text><text x="55" y="52.300" textLength="47" lengthAdjust="spacingAndGlyphs">that you care about the result. Let us go</text><text x="55" y="54.900" textLength="48" lengthAdjust="spacingAndGlyphs">through each of them together and see what</text><text x="55" y="57.500" textLength="23" lengthAdjust="spacingAndGlyphs">can be improved.</text></g>
<text x="48.200" y="56.500" font-size="12" font-weight="700" font-family="'Liberation Serif',serif" fill="#bdbdbd">,</text>
<circle cx="63.500" cy="63.600" r=".9" fill="#d8b128"/><circle cx="66.300" cy="63.600" r=".7" fill="#bdbdbd"/><path d="M121.800 46.800l1.800 2-1.800 2" stroke="#b9ced5" stroke-width=".7" fill="none"/></svg>
<rect x="30.800" y="716.5" width="137.600" height="78.400" fill="#cccccc" stroke="#c9c9c9" stroke-width="1"/><svg x="31.3" y="717.0" width="136.6" height="77.4" viewBox="0 0 136.6 77.4"><rect width="136.600" height="77.400" fill="url(#t6g)"/>
<path d="M67 0C66 6 68 12 76 14C88 16.500 100 11 108 17C116 24 112 36 118 44C124 52 132 50 136.600 48You are asked for a discount that you cannot give, and the client is ready to36.600 0Z" fill="#b4d0d8" opacity=".8"/>
<path d="M0 18C8 32 18 34 24 33You are asked for a discount that you cannot give, and the client is ready to8 77L0 77Z" fill="#a9cbd4" opacity=".5"/>
<path d="M100 77C104 66 118 66 136.600 70You are asked for a discount that you cannot give, and the client is ready to36.600 77Z" fill="#8fbecc" opacity=".7"/>
<g font-family="'DejaVu Sans','Liberation Sans',sans-serif" font-weight="700" font-size="4.300" fill="#2f2d2e"><text x="10.400" y="10.100" textLength="51.200" lengthAdjust="spacingAndGlyphs">Examples of reframing</text><text x="10.400" y="15.200" textLength="41.100" lengthAdjust="spacingAndGlyphs">in communication</text></g>
<g fill="#2a2a2a" font-size="2.900" font-weight="700"><text x="10.400" y="22.600" textLength="67" lengthAdjust="spacingAndGlyphs">Reframing phrases helps to stay positive and move the talk</text><text x="10.400" y="25.200" textLength="7.800" lengthAdjust="spacingAndGlyphs">along.</text></g>
<rect x="17.200" y="31.600" width="101.300" height="34.100" fill="#cccccc"/>
<g fill="#2a2a2a" font-size="2.900" font-weight="700"><text x="22.200" y="38.400" textLength="84" lengthAdjust="spacingAndGlyphs">You are asked for a discount that you cannot give, and the client is ready to</text><text x="22.200" y="40.900" textLength="24" lengthAdjust="spacingAndGlyphs">drop the deal.</text><text x="22.200" y="45.800" textLength="12.500" lengthAdjust="spacingAndGlyphs">Reframing:</text>
<text x="55" y="49.700" textLength="52" lengthAdjust="spacingAndGlyphs">I see the budget is a priority for you. Let</text><text x="55" y="52.300" textLength="57.5" lengthAdjust="spacingAndGlyphs">us look at what can be adjusted so you still get</text><text x="55" y="54.900" textLength="51" lengthAdjust="spacingAndGlyphs">the value you need without a loss in quality,</text><text x="55" y="57.500" textLength="38" lengthAdjust="spacingAndGlyphs">and find a plan that suits you.</text></g>
<text x="48.200" y="56.500" font-size="12" font-weight="700" font-family="'Liberation Serif',serif" fill="#bdbdbd">,</text>
<circle cx="63.500" cy="63.600" r=".7" fill="#bdbdbd"/><circle cx="66.300" cy="63.600" r=".9" fill="#d8b128"/><path d="M13 46.800l-1.800 2 1.800 2" stroke="#b9ced5" stroke-width=".7" fill="none"/><use href="#pill" y=".3"/></svg>
<rect x="30.800" y="811.0" width="137.600" height="78.400" fill="#cccccc" stroke="#c9c9c9" stroke-width="1"/><svg x="31.3" y="811.5" width="136.6" height="77.4" viewBox="0 0 136.6 77.4"><use href="#t2c"/></svg>
</svg>
<!--/THUMBS-->
<div id="slideborder"></div>
<div id="slide">
<!--SLIDE-->
<svg class="abs" style="left:-208px;top:-212px" width="1188" height="825" viewBox="0 0 1188 825">
<defs>
<linearGradient id="gsw" gradientUnits="userSpaceOnUse" x1="690" y1="230" x2="1160" y2="520"><stop offset="0" stop-color="#5aadc8"/><stop offset=".45" stop-color="#72b3c6"/><stop offset="1" stop-color="#8bbbca"/></linearGradient>
<clipPath id="cblob"><path id="blobp" d="M655.500 212L1159 212L1159 628C1140 610 1120 592 1100 582C1075 568 1050 560 1030 556C1000 551 970 548 945 543C925 538 910 532 899 527C870 510 840 480 815 451C806 432 803 420 800.600 410C797 398 795 390 793 383C789 365 785 345 780 330C778 322 777 319 775.600 315.800C765 290 750 268 727 249.600C705 236 680 224 655.500 212Z"/></clipPath>
</defs>
<g id="art">
<path d="M655.500 212L1159 212L1159 628C1140 610 1120 592 1100 582C1075 568 1050 560 1030 556C1000 551 970 548 945 543C925 538 910 532 899 527C870 510 840 480 815 451C806 432 803 420 800.600 410C797 398 795 390 793 383C789 365 785 345 780 330C778 322 777 319 775.600 315.800C765 290 750 268 727 249.600C705 236 680 224 655.500 212Z" fill="#9ac4cf"/>
<g clip-path="url(#cblob)">
<path d="M690 234C710 228 725 227.500 740 229C775 232 805 240 829 248C855 257 880 268 900 279C930 297 950 318 974 332C1000 347 1030 358 1058 360C1095 361 1130 352 1159 341L1159 760L600 760L600 234Z" fill="url(#gsw)"/>
</g>
<!-- network -->
<g stroke="#d3d7d9" stroke-width="1.500" fill="none">
<path d="M800.300 287L857 300L932 317.500L1001.400 307L1070.800 296 M800.300 287L799 336L799 356 M1000 261L1070.800 296L1104.700 359 M1070.800 296L1062 364L1057 398L1071 493L1091 550L1076 570 M1091 550L1030 557"/>
<g stroke-dasharray="6.500 4">
<path d="M740.500 255.500L800.300 287L890.200 234.400 M775 312L800.300 287 M799 336L843 332L857 300 M890.200 234.400L1000 261L1001.400 307 M1070.800 296L1108 258.800 M1062 364L1104.700 359L1139 449.400L1091 550L1100.700 580"/>
</g>
</g>
<g fill="#d2d2d2">
<circle cx="740.500" cy="255.500" r="12.500"/><circle cx="890.200" cy="234.400" r="5"/><circle cx="857" cy="300" r="5.500"/><circle cx="799" cy="336" r="5"/><circle cx="843" cy="332" r="12.500"/>
<circle cx="1000" cy="261" r="12.500"/><circle cx="1108" cy="258.800" r="5"/><circle cx="1001.400" cy="307" r="5.500"/><circle cx="932" cy="317.500" r="2"/><circle cx="1104.700" cy="359" r="12.500"/><circle cx="1062" cy="364" r="5.500"/><circle cx="1139" cy="449.400" r="5"/><circle cx="1157" cy="555" r="5"/>
</g>
<!--ART2-->
<!-- gears -->
<g fill="#5f7f9d">
<g transform="translate(740.500 255.500)"><path id="gear8" d="M-1.400-7.600h2.800l.5 2 1.600.7 1.800-1.100 2 2-1.100 1.800.7 1.600 2 .5v2.800l-2 .5-.7 1.600 1.100 1.800-2 2-1.800-1.100-1.600.7-.5 2h-2.800l-.5-2-1.600-.7-1.800 1.100-2-2 1.100-1.800-.7-1.600-2-.5v-2.800l2-.5.700-1.600-1.100-1.800 2-2 1.800 1.100 1.600-.7z M0-4.300a4.300 4.300 0 1 0 .01 0z" fill-rule="evenodd"/><circle r="2.100"/></g>
<g transform="translate(1104.700 359)"><use href="#gear8"/><circle r="2.100"/></g>
<g transform="translate(1031.300 325.500) rotate(8) scale(1.560)"><use href="#gear8"/><circle r="2.600"/></g>
<g transform="translate(1047 338.200) scale(.8)"><use href="#gear8"/><circle r="2.100"/></g>
</g>
<!-- chair -->
<path d="M1105 399.300C1108.500 399 1107.500 403 1106.800 405.300C1106 414 1104.500 421 1102.500 429C1100 437.500 1097 445 1094 452.800C1091 459 1088.500 464 1085.500 469.700C1083 475 1080 480 1077 485C1074.500 489.500 1071.500 493.500 1068.600 496.900C1065.500 500 1062 502.500 1058.400 503.700L1057.700 507L1057.700 575L1044.300 575L1044 507L1040.600 507.100L1042.300 497.200C1046 496.500 1049 495.500 1051.600 493.800C1055.500 492 1059 489.500 1061.800 486.700C1065.500 483 1068.500 479 1070.300 474.800C1072.500 470.500 1074 466 1073.700 461.300C1073.500 456.500 1072.500 452 1072 447.700C1075 439.500 1078.500 432 1082.200 424C1086 416.500 1091 409.500 1095.700 403.600C1098.500 401 1102 399.500 1105 399.300Z" fill="#cda920"/>
<ellipse cx="1050.500" cy="582" rx="25" ry="7.500" fill="#cda920"/>
<!-- standing man -->
<path d="M974 436L979 424L1004 415L1018.500 404L1023 412L1020 437Z" fill="#d9b660"/>
<g stroke="#e2c47a" stroke-width=".7"><path d="M980 424v12 M984 422.500v14 M988 421v15 M992 419.500v17 M996 418v18 M1000 416.500v20 M1004 415v22 M1008 412v25 M1012 409v28 M1016 406v31"/></g>
<path d="M956 518L971 518L971 568L956 569Z M986 518L1005 518L1004 570L986 569Z" fill="#d9b660"/>
<g stroke="#c9a44e" stroke-width=".6"><path d="M960 519v49 M964 519v49 M968 519v49 M990 519v50 M994 519v50 M998 519v50 M1002 519v50"/></g>
<path d="M942 580C946 574 953 570 960.400 570L959 575C955 579 948 581 942 580Z M980.400 583C984 576 992 571 1000.400 570.500L999 576C995 581 987 584 980.400 583Z" fill="#5b4f95"/>
<path d="M1006.900 338.500C1011 333 1016 329.500 1021.500 328.800C1026 329.500 1029 332.500 1031.200 336.500C1033.500 341.500 1034.500 346.500 1035 352C1035.500 358 1034 363 1032.100 367.600C1030 376 1028.500 384.500 1026.300 392.800C1025 396.500 1023.500 400 1021.500 402.500C1016 407 1010 411 1004 414.100C998 417 991.500 419 984.600 420C980 420.500 976.500 419 975.900 416C974.500 413.500 973.500 411 974 408.300L972 420L965 426L965.200 425.800C965.500 419 965.800 412.500 966.200 406.400C966.800 396 967.500 386.500 969.100 377.300C970.500 372.500 972.500 369 974.900 365.600L985 348.200Z" fill="#adadad"/>
<path d="M984.500 349L990 345L1004 343L1006.900 338.500C1008.500 341 1009.500 343.500 1009.800 346.200C1012 352 1014 357.500 1014.700 363.700C1014.500 369 1013.500 374 1011.800 379.200C1008 385.500 1003.500 390.500 998.200 394.700C992 398.500 985.500 401 978.800 402.500C977 396 975 389.500 973.800 383C973.600 376.500 974.500 370.500 976.500 365C978.500 359 981 353.500 984.500 349Z" fill="#cecece"/>
<path d="M984 348.500C986 355.500 990 361.500 995.500 364.200C1001.500 362 1006.500 356 1008.700 348.500 M974.900 365.600C973.800 372 973.500 378 973.800 383C975 389.500 977 396 978.800 402.500C985.500 401 992 398.500 998.200 394.700C1003.500 390.500 1008 385.500 1011.800 379.200 M975.900 416C974.500 413.500 973.500 411 974 408.300C975 405.500 976.500 403.500 978.800 402.500" stroke="#6e6e6e" stroke-width=".7" fill="none"/>
<path d="M964.200 428.700L973 420L978.800 416L982.700 421.900L978.800 425.800L971 426.700Z" fill="#c99673"/>
<path d="M972 320L976.800 316.200L981.700 319.100L986.500 315.200L989.500 319.100L993.300 324.900L995.300 331.700C999 334 1003 336 1006.900 338.500L1008 347L1003 354.500L995.800 358.800L989.500 353.500L986 348.200L987.500 340.400L985.600 336.500C983.500 337.500 981.500 338 979.800 337.500C977.500 336.500 976 335 974.900 333.600C973.500 331.500 972.500 329.500 972 326.900Z" fill="#c99673"/>
<path d="M964.200 321C965.500 317.500 967 314 969.100 311.300C970.500 308 972.500 305.500 974.900 303.600C977 301.800 979.500 300.700 981.700 300.700C985 300.700 988 301.800 990.400 303.600C993 305.500 995 308 996.200 311.300C997 314 997.300 316.500 996.800 319.100C996 321.500 995 323.500 993.300 324.900C992 322.500 990.500 320.500 989.500 319.100L986.500 315.200L981.700 319.100L976.800 316.200C974.500 317.500 972.500 319 971 320C968.500 321 966.500 321.500 964.200 321Z" fill="#964e42"/>
<!--/ART2-->
<!--ART3-->
<!-- woman torso -->
<path d="M917.500 375.700L903 391.800L888.600 393.900C886 400 884 406 882.400 412.400C878 418 873 422.500 868 426.800C862.500 431.500 857 435.500 851.500 439.200L834 450.500L839.200 460.800L853.600 458.800C862 455 870.500 450.500 878.300 445.400C884 441.500 889 436.500 892.700 431C896 425 898.500 419 901 412.400L901 437L951.500 437C953.500 431 954.800 425 955.600 418.600C957.500 412.500 958.500 406 958.700 400C958.800 394 958.500 388.500 957.600 383.600C956.500 379.500 954.800 376.500 952.500 374.300C949.500 373.500 946.500 373.800 944.200 374.300L937 376.400Z" fill="#bc505e"/>
<path d="M917.500 376.400L923.600 374.300L928.800 365L928.800 352.700L942.200 355.800L943.200 365L940.100 371.200L935 374.300L936 377.400L931.900 391.800L927.800 399L919.500 383.600Z" fill="#c99673"/>
<path d="M917 377C919.500 386 923 394 927.800 401C932 395 935.500 388 937.500 379.500 M946 381C947 390 946.500 398 945 405" stroke="#a33a4f" stroke-width="1" fill="none"/>
<!-- woman legs -->
<path d="M872 516L899 516C898 540 893 565 884 588L876.500 587C872 565 870.500 540 872 516Z" fill="#3a3056"/>
<path d="M850 516L882 516C870 532 845 555 808 574.500L797 573L796 567C815 552 835 535 850 516Z" fill="#342b5e"/>
<path d="M778.600 577C785 573.500 792 571.500 797.500 572L803 576C801.500 580 800 584 798.700 587.500L795.500 580C790 578.500 784 577.500 778.600 577Z M861.600 598.800C866 593 871.500 588.500 876.500 586.500L884.500 588C884.500 591.500 884 595 883 598L879.500 592C873.500 594 867.500 596.500 861.600 598.800Z" fill="#b5272f"/>
<!-- sitting man legs -->
<path d="M983 518L1012 518C1022 530 1030 550 1035 582L1018 584C1010 560 998 538 983 518Z" fill="#2b2e42"/>
<path d="M1030 518L975 518C955 530 935 548 918 572L926 584C950 575 975 560 995 545C1010 535 1022 526 1030 518Z" fill="#22233a"/>
<path d="M1045.700 473.100L1071.100 450.200C1073 454 1074 457.500 1073.700 461.300C1074 466 1072.500 470.500 1070.300 474.800C1068.500 479 1065.500 483 1061.800 486.700C1059 489.500 1055.500 492 1051.600 493.500C1048.500 495 1045.500 496 1042.300 496.900Z" fill="#2b2e42"/>
<path d="M917 574L924 586L920 580Z" fill="#d9a37f"/>
<path d="M914.500 576.500L921 573.500L925.500 583L920 585.500Z" fill="#d9a37f"/>
<path d="M894.500 584.500C901 580.500 908 578.500 914.500 578L922 583.500C922.500 586 922 588 921.700 588.800C912 589.500 903 588 894.500 584.500Z" fill="#7a4a2a"/>
<path d="M1012 586.500C1017 584 1024 582.500 1034 582.500L1036.500 585C1036.500 588 1036 589.500 1035 590C1027 590.500 1019 589.500 1012 586.500Z" fill="#7a4a2a"/>
<!-- table -->
<path d="M770.500 511L774.500 511.500L754 606L751.400 608.800L750.300 604Z M851 515.500L855.500 515.500L842.500 572L840 574.400L839 570.500Z M1002.500 518L1007 518.500L1026.500 604L1024.800 608.800L1022 606Z" fill="#4e2e20"/>
<path d="M843.500 436L1056 437.500L1046 472.300L1035.500 519L755.700 511L754 506.500Z" fill="#7f4c34"/>
<path d="M754.300 504.500L1036.500 512.500L1046 472.300L1048.500 473L1037 520.800L756 512.300C753.300 510.800 753.300 506.500 754.300 504.500Z" fill="#512e20"/>
<!-- plant -->
<path d="M787 453L799.500 450.500C803 445 805 440 806.700 434C810 428 813 424 816 419.500C818.500 415 818.500 412 816 411C813 409.500 811 408.500 809.800 408.200C807 407.500 804.500 407.600 802.600 407.200C800.500 405 800.500 403 801.500 401C804 396 808 392 811.900 388.600C815 385 818.500 382 818 379.300C817.500 377 814 377 811.900 377.300L808.800 376.200C809 372 810.500 369 811.900 366C814 362 815.500 358 816 353.600C816.500 350 816 347.500 813.900 347.800C811 347.500 808 349 805.700 350.500C802.500 352.500 800 355 798.500 357.700C797 362 796.800 366 796.400 370C795.800 374 795.200 378.500 794.300 382.400C793 386 790.500 389 788.100 389.600C786 388 785.300 385 785 382.400C784.500 378 784.300 374 784 370C783.500 367 782 365.500 779.900 365.500C777.500 365.500 775.800 367.500 775.200 370C774.500 374 774.500 378.500 774.700 382.400C775.500 389.500 776.500 396 777.800 403C778.800 409 780 415.500 780.900 421.600C781.500 425 780.500 428.500 778.900 429.800C776 430 773.500 427.500 770.600 426.800C768 426.200 765 427.500 764.800 429.800C764.800 432.500 766 435.500 767.500 438C770 442.500 773.500 447 776.800 450.500L781 453Z" fill="#8db18d"/>
<g stroke="#5f8f72" stroke-width=".9" fill="none" stroke-linecap="round"><path d="M787.500 452C788 430 792 405 798 385C802 372 807 360 811 352 M796 392C792 385 788 378 786 371 M790 415C785 408 781 400 779 392 M788 436C782 432 776 428 771 431 M793.500 402C799 399 806 392 813 383 M790.500 420C797 418 806 414 813 414 M788.500 438C794 436 800 430 804 424 M801 376C803 370 806 364 810 358 M798 380C797 374 798 366 801 360"/></g>
<path d="M769 453L804 453C805 470 803 484 796 492.500C793 496 788.500 497 785 494.500C775 487 769 470 769 453Z" fill="#cfa922"/>
<!-- papers -->
<path d="M816.500 475.300L859.800 452.600L871 461.900L871 470L843.300 486.600Z" fill="#d2d2d2"/>
<path d="M826 476.500L848 483 M830 472.500L853 479.500" stroke="#aeb8cb" stroke-width=".8"/>
<path d="M871 452.600L902.400 448.500L912.700 487.600L870 486.200Z" fill="#d6d6d6"/>
<g stroke="#aeb8cb" stroke-width=".8"><path d="M875 457L902 455.700 M875.500 461.800L903.300 460.500 M876 466.700L904.500 465.400 M876.500 471.800L905.700 470.500 M877 476.800L907 475.500 M877.500 481.900L908 480.600"/></g>
<!-- laptop -->
<path d="M921.500 429.300L973 439.500C977 440.500 979.500 443 980.500 447L984.600 461.300L1005.800 474.800L983.800 495.200L925 472.500C923.500 471.800 922.800 470.500 922.500 469L918.300 433C918 430.500 919.500 429 921.500 429.300Z" fill="#ababab"/>
<path d="M984.600 461.300L1005.800 474.800L983.800 495.200L980 470Z" fill="#999999"/>
<path d="M922.500 436C922.500 448 924 458 928 466.500L976 483.500C979 484.500 980.500 483 980 480" stroke="#8a8a8a" stroke-width="2.400" fill="none" stroke-linecap="round"/>
<circle cx="949.500" cy="437.300" r="1" fill="#7a7a7a"/>
<!-- woman arm & hand -->
<path d="M810.300 473.200C810.500 469.500 811.200 466.500 812.400 464C814.500 460.500 817.500 457.500 820.600 455.700C824 453.500 827.500 451.500 830.900 450.500L836 449.500L840.500 459C838 460.500 835.500 461.500 833 461.900C832 465 831 467.500 829.900 470L827 470.500C827.500 467.500 827.500 465 827 463C821 466 815.500 469.500 810.300 473.200Z" fill="#c99673"/>
<path d="M888.600 393.900C886 400 884 406 882.400 412.400C878 418 873 422.500 868 426.800C862.500 431.500 857 435.500 851.500 439.200L834 450.500L839.200 460.800C844 460.500 849 460 853.600 458.800C862 455 870.500 450.500 878.300 445.400C884 441.500 889 436.500 892.700 431C896 425 898.500 419 901 412.400C902 405 902.500 398 903 391.800Z" fill="#bc505e"/>
<path d="M949.400 354.700C947.500 347 945.500 342 942.200 338.200C939 337 935.500 337 931.900 337.800C928 338.500 924.500 340 921.600 342.400C919 345.500 917.500 349 916.400 352.700C915.700 356.500 915.300 360 915.400 363C911.500 363.500 907 364.500 903 366C899 368 895.500 370.500 892.700 373.300C889.500 376 886.500 378.500 885.500 381.500C885.500 385.500 888 389 890.700 391.800C892 395.500 894 398.500 896.800 400C900.500 400.500 904.500 399.500 907.100 397C909.500 393.500 911 389.500 912.300 385.600C913.500 382 915 378.500 916.400 375.300L923.600 374.300C926 371.500 928 368.500 928.800 365C929.500 361 929.300 357 928.800 353.700C932 352.500 935 352.300 938 352.700C940.500 353.500 942.500 355 944.200 356.800C946 356.500 948 355.800 949.400 354.700Z" fill="#161616"/>
<!-- sitting man body -->
<path d="M1033 408.700C1027 413 1021 418.500 1016 423.900C1009 430 1001 436.500 993.900 442.600L981 453.500L984.600 461.300L995.600 463.800C1004 459 1013 453 1021.100 447.700L1034.700 439.200Z" fill="#d4d4d4"/>
<path d="M1035 395.100L1045.700 389L1047.500 396L1045 412L1039 415.500L1035.500 406Z" fill="#c99673"/>
<path d="M1046.500 394.200C1052 395 1056.500 397 1060.100 400.200C1063 404 1065 408.500 1066 413.800C1066.500 419 1066.800 424 1066.900 429C1068 435.500 1069.500 441.500 1071.100 447.700L1071.100 450.200C1067.500 452.500 1064 454.500 1060.100 456.200C1056.500 459 1053 461.800 1049.900 464.700L1046.500 471.400C1040 473 1034 474 1027.900 474.800L1007.500 479.900L1008.800 468L1024.500 461.300C1029 455 1032.500 448 1034.700 440C1033 430 1032.500 419 1033 408.700L1034.700 406.100C1036 410 1037.500 413 1039 415.500C1042 414 1044.500 410 1045.500 405C1046 401.500 1046.300 397.500 1046.500 394.200Z" fill="#d4d4d4"/>
<path d="M1046 402C1044 415 1041.500 430 1039.500 446 M1061 412C1060 425 1062 440 1065 452" stroke="#b4c3d4" stroke-width=".6" fill="none"/>
<path d="M1008.400 468L1000.700 464.100L994.800 468.900C992.500 473 991 477.500 990.500 481.600C993 480 995.500 478.200 998.200 476.500L1005.800 473.100L1007.600 479.500Z" fill="#c99673"/>
<path d="M1025.300 366.600L1041 366.600L1043.800 376.300L1041 381.200L1035 382.700L1025.300 383Z" fill="#c99673"/>
<path d="M1017.600 360.800C1018.500 358.800 1020 357.500 1021.500 357C1025 356 1029 355.500 1033.100 355.600C1037.500 355.800 1041.500 356.500 1044.700 357.900C1047.500 360 1049.500 363.500 1050.500 367.600C1050.800 371.500 1050 375.500 1048.600 379.200C1048 382.500 1047 386 1045.700 389C1045 390.500 1044 392 1042.800 392.800C1040.500 394.200 1037.800 395 1035 395.100C1032 395.100 1029 394.300 1026.300 392.800C1024 391.500 1022.500 390 1021.800 388C1022.500 386 1023.800 384.200 1025.300 383C1028.500 382.500 1031.800 382.500 1035 382.700C1037.200 382.500 1039.200 382 1040.900 381.200C1042.500 380 1043.500 378.200 1043.800 376.300C1043 375.800 1041.800 375.500 1040.500 375.800C1040.800 373.800 1041.300 372.500 1041.800 371.500C1041.800 369.800 1041.500 368.200 1040.900 366.600C1036 367 1030.500 367 1025.300 366.600C1024 365.500 1022.500 364.800 1021 364.300C1022 363.300 1023 362.500 1024 362C1022 361.200 1019.800 360.800 1017.600 360.800Z" fill="#5e3524"/>
<!--/ART3-->
</g>
<g id="stx" font-family="'DejaVu Sans','Liberation Sans',sans-serif" font-weight="700" fill="#2f2d2e">
<text x="274.300" y="373.400" font-size="22.200" textLength="327.500" lengthAdjust="spacingAndGlyphs">Reframing in negotiations</text>
<text x="275.800" y="426.800" font-size="41.200" textLength="479" lengthAdjust="spacingAndGlyphs">The Power of Positive</text>
<text x="277" y="475.200" font-size="41.200" textLength="356.500" lengthAdjust="spacingAndGlyphs">Communication</text>
<g font-family="'Liberation Sans',sans-serif" font-weight="400" fill="#454545" font-size="16.500">
<text x="276" y="524" textLength="222.300" lengthAdjust="spacingAndGlyphs">Three techniques to unlock w</text><text x="499.600" y="524" textLength="175" lengthAdjust="spacingAndGlyphs">hat reframing in business</text>
<text x="276" y="544" textLength="207" lengthAdjust="spacingAndGlyphs">communication can do for</text>
<text x="276" y="564" textLength="150" lengthAdjust="spacingAndGlyphs">your negotiations</text>
</g>
<rect x="282" y="606" width="133" height="38" rx="19" fill="#d8b128"/>
<text x="348.500" y="630" font-size="13" text-anchor="middle" fill="#2f2d2e">Start</text>
</g>

</svg>
<!--/SLIDE-->
</div>
<!--SELECTION-->
<svg class="abs" style="left:0;top:0;pointer-events:none" width="1188" height="825" viewBox="0 0 1188 825" fill="none">
<path d="M198.400 199.600H1167.500V755.900H198.400Z" stroke="#bebebe" stroke-width="3"/>
<g stroke="#3b3b3b" stroke-width="3">
<path d="M196.880 199.600H1167.500" stroke-dasharray="12.800 12.380"/>
<path d="M196.880 755.900H1167.500" stroke-dasharray="12.800 12.380"/>
<path d="M198.400 198.420V755.900" stroke-dasharray="12.800 12.380"/>
<path d="M1167.500 198.420V755.900" stroke-dasharray="12.800 12.380"/>
</g>
<g fill="#cdcdcd" stroke="#3f3f3f" stroke-width="1.600">
<circle cx="198.400" cy="199.600" r="5"/><circle cx="683" cy="199.600" r="5"/><circle cx="1167.500" cy="199.600" r="5"/>
<circle cx="198.400" cy="477.700" r="5"/><circle cx="1167.500" cy="477.700" r="5"/>
<circle cx="198.400" cy="755.900" r="5"/><circle cx="683" cy="755.900" r="5"/><circle cx="1167.500" cy="755.900" r="5"/>
</g>
</svg>
<!--/SELECTION-->
<!--DIALOG-->
<div id="dlg" class="abs" style="left:217px;top:419px;width:276.300px;height:318.500px;background:#2a2a2a;font-size:11.100px;color:#9c9c9c">
<div class="abs" style="left:0;top:0;width:100%;height:26px;background:#2f2f2f"></div>
<div class="abs" style="left:11.500px;top:6px;font-size:10px;line-height:14px;color:#cfcfcf;white-space:pre;transform:scaleX(.95);transform-origin:0 50%">Recording Settings</div>
<svg class="abs" style="left:0;top:0" width="277" height="319" viewBox="217 419 277 319" fill="none">
<path d="M460 435.500h7.500" stroke="#a8a8a8" stroke-width="1.200"/>
<path d="M476.800 427.200l8 8 M484.800 427.200l-8 8" stroke="#b5b5b5" stroke-width="1.300"/>
<rect x="228.700" y="450.400" width="76.800" height="69.400" rx="3" fill="#212121" stroke="#ee5a43" stroke-width="1.700"/>
<!-- monitor -->
<rect x="251.200" y="464.700" width="31.200" height="18.600" rx="2.300" stroke="#b9b9b9" stroke-width="2.700"/>
<path d="M264 484.500h5.800l.8 4.300h-7.400z" fill="#b9b9b9"/><path d="M259.800 489.700h14.200" stroke="#b9b9b9" stroke-width="1.500"/>
<!-- camera -->
<rect x="329.200" y="468" width="24.600" height="18" rx="2.500" stroke="#7b7b7b" stroke-width="2.300"/>
<path d="M355.500 474.500l8-4.800v14.600l-8-4.800" stroke="#7b7b7b" stroke-width="2.200" stroke-linejoin="round"/>
<!-- screen and camera -->
<path d="M444.500 475v-8a2.300 2.300 0 0 0 -2.300-2.300h-25a2.300 2.300 0 0 0 -2.300 2.300v13.700a2.300 2.300 0 0 0 2.300 2.300h19" stroke="#7b7b7b" stroke-width="2.700"/>
<path d="M427 484.300h5.800l.8 4.300h-7.400z" fill="#7b7b7b"/><path d="M423.600 489.500h11.600" stroke="#7b7b7b" stroke-width="1.400"/>
<rect x="438.800" y="478" width="9.500" height="8.600" rx="1.200" stroke="#7b7b7b" stroke-width="2"/>
<path d="M449.300 480.800l4.300-2.300v7.600l-4.300-2.300z" fill="#7b7b7b" stroke="#7b7b7b" stroke-width="1" stroke-linejoin="round"/>
<path d="M229 526.700h252 M229 691.900h252" stroke="#3e3e3e" stroke-width="1"/>
<!-- dropdowns -->
<rect x="331.300" y="545.200" width="148.600" height="21.300" rx="1.500" fill="#515151"/>
<rect x="331.300" y="573.500" width="148.600" height="21.300" rx="1.500" fill="#515151"/>
<rect x="331.300" y="602" width="42" height="21.900" rx="1.500" fill="#515151"/>
<rect x="396.700" y="602" width="42" height="21.900" rx="1.500" fill="#515151"/>
<rect x="331.300" y="630.500" width="148.600" height="21.500" rx="1.500" fill="#3b3b3b"/>
<path d="M464.800 552.800h5.800l-2.900 5.400z M464.800 581.200h5.800l-2.900 5.400z" fill="#e6e6e6"/>
<path d="M464.800 638h5.800l-2.900 5.400z" fill="#666"/>
<!-- lock -->
<path d="M381.500 612.500h8.500v6h-8.500z" fill="#8e8e8e"/>
<path d="M383 612.500v-2a2.700 2.700 0 0 1 5.400 0v.3" stroke="#8e8e8e" stroke-width="1.300"/>
<!-- mic -->
<rect x="335.200" y="661" width="4.400" height="8.500" rx="2.200" fill="#9a9a9a"/>
<path d="M333.200 666.500v1.300a4.200 4.200 0 0 0 8.400 0v-1.300 M337.400 672v2.700 M334.800 675h5.200" stroke="#9a9a9a" stroke-width="1"/>
<path d="M335 663.500h4.800 M335 665.500h4.800 M335 667.500h4.800" stroke="#2a2a2a" stroke-width=".6"/>
<!-- meter -->
<path d="M350.500 668h37.500" stroke="#3fae49" stroke-width="8" stroke-dasharray="1.500 1"/>
<path d="M388 668h92" stroke="#505050" stroke-width="8" stroke-dasharray="1.500 1"/>
<!-- gear -->
<g transform="translate(236.500 713) scale(.78)"><path d="M-1.500-7.300h3l.5 2.100 1.600.7 1.900-1.200 2.100 2.100-1.200 1.900.7 1.600 2.100.5v3l-2.100.5-.7 1.600 1.200 1.900-2.100 2.100-1.900-1.200-1.600.7-.5 2.100h-3l-.5-2.100-1.600-.7-1.900 1.200-2.100-2.100 1.200-1.900-.7-1.600-2.100-.5v-3l2.100-.5.700-1.600-1.200-1.900 2.100-2.100 1.900 1.200 1.600-.7z" fill="#a3a3a3"/><circle r="2.500" fill="#2a2a2a"/></g>
<!-- record -->
<circle cx="354.800" cy="714.500" r="13.800" stroke="#b8b8b8" stroke-width="1.600" fill="#2a2a2a"/>
<circle cx="354.800" cy="714.500" r="10" fill="#ee2d37"/>
<!-- cursor -->
<path d="M291.400 502.600v25.400l5.800-5.400l4.500 9.900l4.600-2.100l-4.500-9.800h9.100z" fill="#ffffff" stroke="#000000" stroke-width="1.500" stroke-linejoin="miter"/>
</svg>
<div class="abs dl" style="left:30px;top:78px;width:38.500px;color:#f0f0f0;-webkit-text-stroke:.35px #f0f0f0">Screen</div>
<div class="abs dl" style="left:107.500px;top:78px;width:42.500px;color:#9a9a9a">Camera</div>
<div class="abs dl" style="left:166.500px;top:78px;width:101px;color:#9a9a9a">Screen and Camera</div>
<div class="abs lb" style="left:11px;top:127px">Recording area:</div>
<div class="abs lb" style="left:11px;top:156px">Preset:</div>
<div class="abs lb" style="left:11px;top:186px">Dimensions:</div>
<div class="abs lb" style="left:11px;top:214.500px">Microphone:</div>
<div class="abs dv" style="left:122px;top:129.500px">Screen area</div>
<div class="abs dv" style="left:122px;top:158.600px">Custom</div>
<div class="abs dv" style="left:122px;top:186.800px">1158</div>
<div class="abs dv" style="left:187px;top:186.800px">666</div>
<div class="abs dv" style="left:122px;top:215.300px;color:#6a6a6a">Microphone (Logi C61...</div>
</div>
<!--/DIALOG-->
</body>
</html>
